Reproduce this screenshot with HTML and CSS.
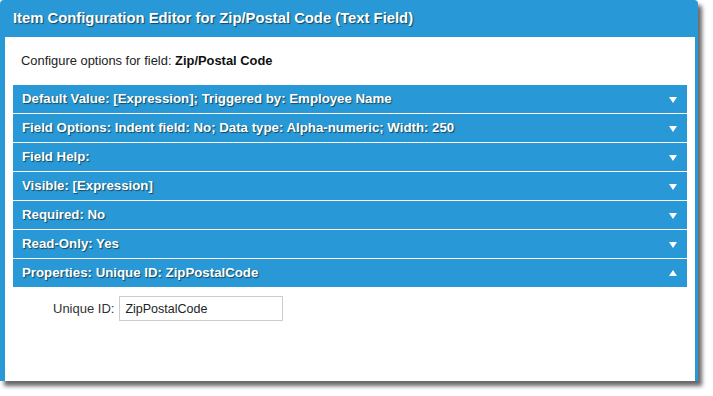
FILE: index.html
```html
<!DOCTYPE html>
<html>
<head>
<meta charset="utf-8">
<link rel="stylesheet" href="styles.css">
</head>
<body>
<div class="dialog">
  <div class="dialog-header">Item Configuration Editor for Zip/Postal Code (Text Field)</div>
  <div class="dialog-body">
    <p class="intro">Configure options for field: <b>Zip/Postal Code</b></p>
    <div class="accordion">
      <div class="acc-row"><span>Default Value: [Expression]; Triggered by: Employee Name</span><i class="arrow down"></i></div>
      <div class="acc-row"><span>Field Options: Indent field: No; Data type: Alpha-numeric; Width: 250</span><i class="arrow down"></i></div>
      <div class="acc-row"><span>Field Help:</span><i class="arrow down"></i></div>
      <div class="acc-row"><span>Visible: [Expression]</span><i class="arrow down"></i></div>
      <div class="acc-row"><span>Required: No</span><i class="arrow down"></i></div>
      <div class="acc-row"><span>Read-Only: Yes</span><i class="arrow down"></i></div>
      <div class="acc-row"><span>Properties: Unique ID: ZipPostalCode</span><i class="arrow up"></i></div>
      <div class="acc-panel">
        <label class="field-label">Unique ID:</label>
        <input class="field-input" type="text" value="ZipPostalCode">
      </div>
    </div>
  </div>
</div>
</body>
</html>
```
FILE: styles.css
```css
html, body {
  margin: 0;
  padding: 0;
  background: #fff;
}
body {
  font-family: "Liberation Sans", Arial, sans-serif;
  height: 396px;
}
.dialog {
  width: 698px;
  height: 381px;
  box-sizing: border-box;
  background: #2899d6;
  border-radius: 4px 4px 0 0;
  padding: 0 3px 0 5px;
  display: flex;
  flex-direction: column;
  box-shadow: 4px 5px 4px rgba(0, 0, 0, 0.6);
}
.dialog-header {
  height: 37px;
  flex: none;
  box-sizing: border-box;
  padding: 10px 0 0 8px;
  color: #fff;
  font-weight: bold;
  font-size: 14.8px;
  line-height: 17px;
  text-shadow: 1px 1px 1px rgba(0, 0, 0, 0.55);
}
.dialog-body {
  flex: 1;
  background: #fff;
  padding: 0 8px;
}
.intro {
  margin: 0;
  padding: 16px 0 0 8px;
  height: 48px;
  box-sizing: border-box;
  font-size: 12.9px;
  line-height: 16px;
  color: #222;
}
.intro b {
  color: #111;
}
.accordion {
  display: flex;
  flex-direction: column;
  gap: 1px;
}
.acc-row {
  height: 28px;
  background: #2899d6;
  display: flex;
  align-items: center;
  justify-content: space-between;
  padding: 0 10px 0 9px;
  color: #fff;
  font-weight: bold;
  font-size: 13.25px;
  text-shadow: 1px 1px 1px rgba(0, 0, 0, 0.55);
}
.acc-row span {
  padding-bottom: 1px;
}
.arrow {
  width: 0;
  height: 0;
  border-left: 4.5px solid transparent;
  border-right: 4.5px solid transparent;
}
.arrow.down {
  border-top: 6px solid #fff;
  margin-top: 1px;
}
.arrow.up {
  border-bottom: 6px solid #fff;
  margin-top: -1px;
}
.acc-panel {
  display: flex;
  align-items: center;
  padding: 8px 0 0 40px;
  gap: 5px;
}
.field-label {
  font-size: 13px;
  color: #333;
}
.field-input {
  width: 164px;
  height: 25px;
  box-sizing: border-box;
  border: 1px solid #ccc;
  padding: 0 5px;
  font-family: "Liberation Sans", Arial, sans-serif;
  font-size: 12.5px;
  color: #222;
  outline: none;
}
```
